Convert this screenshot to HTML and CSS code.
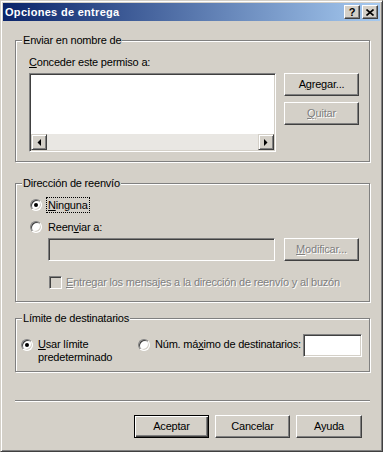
FILE: index.html
```html
<!DOCTYPE html>
<html lang="es">
<head>
  <meta charset="UTF-8">
  <title>Opciones de entrega</title>
  <link rel="stylesheet" href="styles.css">
</head>
<body>
  <div class="window">
    <div class="titlebar">
      <span class="title">Opciones de entrega</span>
      <div class="caption-buttons">
        <button class="cap-btn help">?</button>
        <button class="cap-btn close">
          <svg width="8" height="7" viewBox="0 0 8 7"><path d="M0.5 0.5 L7.5 6.5 M7.5 0.5 L0.5 6.5" stroke="#000" stroke-width="1.6" fill="none"/></svg>
        </button>
      </div>
    </div>

    <div class="content">
      <!-- Enviar en nombre de -->
      <div class="group group-send">
        <div class="group-title">Enviar en nombre de</div>
        <div class="field-label"><u>C</u>onceder este permiso a:</div>
        <div class="list-row">
          <div class="listbox">
            <div class="list-area"></div>
            <div class="hscroll">
              <span class="sbtn"><svg width="4" height="7" viewBox="0 0 4 7"><path d="M4 0 L4 7 L0.5 3.5 Z" fill="#000"/></svg></span>
              <span class="track"></span>
              <span class="sbtn"><svg width="4" height="7" viewBox="0 0 4 7"><path d="M0 0 L0 7 L3.5 3.5 Z" fill="#000"/></svg></span>
            </div>
          </div>
          <div class="side-buttons">
            <button class="btn">A<u>g</u>regar...</button>
            <button class="btn" disabled><u>Q</u>uitar</button>
          </div>
        </div>
      </div>

      <!-- Dirección de reenvío -->
      <div class="group group-fwd">
        <div class="group-title">Dirección de reenvío</div>
        <div class="radio-row first">
          <span class="radio checked"></span>
          <span class="radio-label focused"><u>N</u>inguna</span>
        </div>
        <div class="radio-row second">
          <span class="radio"></span>
          <span class="radio-label">Reen<u>v</u>iar a:</span>
        </div>
        <div class="fwd-row">
          <div class="textbox disabled fwd-input"></div>
          <button class="btn" disabled><u>M</u>odificar...</button>
        </div>
        <div class="check-row">
          <span class="checkbox"></span>
          <span class="check-label disabled-text"><u>E</u>ntregar los mensajes a la dirección de reenvío y al buzón</span>
        </div>
      </div>

      <!-- Límite de destinatarios -->
      <div class="group group-limit">
        <div class="group-title">Límite de destinatarios</div>
        <div class="limit-row">
          <div class="opt opt-default">
            <span class="radio checked"></span>
            <span class="opt-label"><u>U</u>sar límite<br>predeterminado</span>
          </div>
          <div class="opt">
            <span class="radio"></span>
            <span class="opt-label nowrap">Núm. má<u>x</u>imo de destinatarios:</span>
          </div>
          <div class="textbox limit-input"></div>
        </div>
      </div>

      <div class="separator"></div>

      <div class="dialog-buttons">
        <button class="btn default">Aceptar</button>
        <button class="btn">Cancelar</button>
        <button class="btn btn-help">Ayuda</button>
      </div>
    </div>
  </div>
</body>
</html>
```

FILE: styles.css
```css
* {
  margin: 0;
  padding: 0;
  box-sizing: border-box;
}
body {
  font-family: 'Liberation Sans', Arial, sans-serif;
  font-size: 11px;
  line-height: 13px;
  letter-spacing: -0.2px;
  color: #000;
  background: #d4d0c8;
}
.window {
  width: 383px;
  height: 452px;
  padding: 2px;
  background: #d4d0c8;
  border: 1px solid;
  border-color: #d4d0c8 #404040 #404040 #d4d0c8;
  box-shadow: inset 1px 1px #fff, inset -1px -1px #808080;
}
.titlebar {
  height: 18px;
  display: flex;
  align-items: center;
  justify-content: space-between;
  padding: 0 2px;
  background: linear-gradient(to right, #0a246a, #a6caf0);
}
.title {
  color: #fff;
  font-weight: bold;
  font-size: 11px;
  letter-spacing: 0.3px;
}
.caption-buttons {
  display: flex;
  gap: 2px;
}
.cap-btn {
  width: 16px;
  height: 14px;
  display: flex;
  align-items: center;
  justify-content: center;
  background: #d4d0c8;
  border: 1px solid;
  border-color: #fff #404040 #404040 #fff;
  box-shadow: inset -1px -1px #808080;
  font-family: 'Liberation Sans', Arial, sans-serif;
  font-weight: bold;
  font-size: 11px;
  line-height: 11px;
  letter-spacing: 0;
  color: #000;
}
.content {
  padding: 19px 0 0 12px;
}

/* etched group frame */
.group {
  width: 355px;
  border: 1px solid #808080;
  box-shadow: inset 1px 1px #fff, 1px 1px #fff;
}
.group-title {
  width: fit-content;
  margin: -7px 0 0 6px;
  padding: 0 1px;
  background: #d4d0c8;
}

/* buttons and fields */
.btn {
  width: 75px;
  height: 23px;
  display: flex;
  align-items: center;
  justify-content: center;
  font: inherit;
  letter-spacing: inherit;
  color: #000;
  background: #d4d0c8;
  border: 1px solid;
  border-color: #fff #404040 #404040 #fff;
  box-shadow: inset -1px -1px #808080;
}
.btn:disabled {
  color: #808080;
  text-shadow: 1px 1px #fff;
}
.btn.default {
  border-color: #000;
  box-shadow: inset 1px 1px #fff, inset -1px -1px #404040, inset -2px -2px #808080;
}
.textbox, .listbox, .checkbox {
  border: 1px solid;
  border-color: #808080 #fff #fff #808080;
  box-shadow: inset 1px 1px #404040, inset -1px -1px #d4d0c8;
  background: #fff;
}
.textbox.disabled {
  background: #d4d0c8;
}
.disabled-text {
  color: #808080;
  text-shadow: 1px 1px #fff;
}
.nowrap {
  white-space: nowrap;
}

/* Enviar en nombre de */
.group-send {
  padding-bottom: 9px;
}
.field-label {
  margin: 9px 0 0 13px;
}
.list-row {
  display: flex;
  gap: 8px;
  margin: 4px 0 0 13px;
}
.listbox {
  width: 247px;
  height: 79px;
  padding: 1px;
  display: flex;
  flex-direction: column;
}
.list-area {
  flex: 1;
  background: #fff;
}
.hscroll {
  height: 16px;
  display: flex;
}
.sbtn {
  width: 16px;
  height: 16px;
  display: flex;
  align-items: center;
  justify-content: center;
  background: #d4d0c8;
  border: 1px solid;
  border-color: #d4d0c8 #404040 #404040 #d4d0c8;
  box-shadow: inset 1px 1px #fff, inset -1px -1px #808080;
}
.track {
  flex: 1;
  background: #e9e7e3;
}
.side-buttons {
  display: flex;
  flex-direction: column;
  gap: 6px;
}

/* radio buttons */
.radio {
  position: relative;
  flex: none;
  width: 12px;
  height: 12px;
  border-radius: 50%;
  border: 1px solid;
  border-color: #808080 #fff #fff #808080;
  background: #fff;
  box-shadow: inset 1px 1px #404040, inset -1px -1px #d4d0c8;
}
.radio.checked::after {
  content: '';
  position: absolute;
  left: 3px;
  top: 3px;
  width: 4px;
  height: 4px;
  border-radius: 50%;
  background: #000;
}

/* Dirección de reenvío */
.group-fwd {
  margin-top: 21px;
  padding-bottom: 11px;
}
.radio-row {
  display: flex;
  align-items: center;
  height: 16px;
  margin-left: 14px;
}
.radio-row.first {
  margin-top: 7px;
}
.radio-row.second {
  margin-top: 6px;
}
.radio-label {
  margin-left: 4px;
  padding: 0 1px;
  line-height: 14px;
  border: 1px dotted transparent;
}
.radio-label.focused {
  border-color: #000;
}
.fwd-row {
  display: flex;
  gap: 9px;
  margin: 3px 0 0 32px;
}
.fwd-input {
  width: 227px;
  height: 23px;
}
.check-row {
  display: flex;
  align-items: center;
  height: 16px;
  margin: 13px 0 0 33px;
}
.checkbox {
  width: 13px;
  height: 13px;
  background: #d4d0c8;
}
.check-label {
  margin-left: 4px;
}

/* Límite de destinatarios */
.group-limit {
  margin-top: 16px;
  padding-bottom: 7px;
}
.limit-row {
  display: flex;
  align-items: flex-start;
  margin: 9px 7px 0 5px;
}
.opt {
  display: flex;
  align-items: flex-start;
  margin-top: 4px;
}
.opt-default {
  width: 117px;
}
.opt .radio {
  margin-top: 1px;
}
.opt-label {
  margin-left: 5px;
}
.limit-input {
  width: 59px;
  height: 23px;
  margin-left: auto;
}

.separator {
  width: 355px;
  margin-top: 28px;
  border-top: 1px solid #808080;
  border-bottom: 1px solid #fff;
}
.dialog-buttons {
  width: 355px;
  display: flex;
  justify-content: flex-end;
  gap: 6px;
  margin-top: 13px;
  padding-right: 8px;
}
.btn-help {
  width: 66px;
}
```
